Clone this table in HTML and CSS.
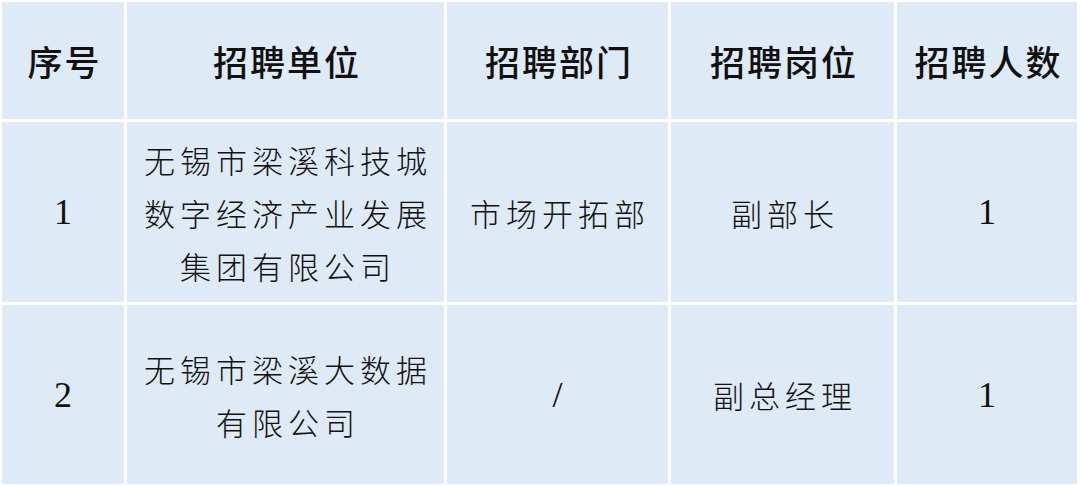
FILE: index.html
```html
<!DOCTYPE html>
<html lang="zh-CN">
<head>
<meta charset="utf-8">
<title>招聘岗位</title>
<link rel="stylesheet" href="styles.css">
</head>
<body>
<div class="table">
  <div class="cell head">序号</div>
  <div class="cell head">招聘单位</div>
  <div class="cell head">招聘部门</div>
  <div class="cell head">招聘岗位</div>
  <div class="cell head">招聘人数</div>

  <div class="cell num">1</div>
  <div class="cell body">无锡市梁溪科技城<br>数字经济产业发展<br>集团有限公司</div>
  <div class="cell body">市场开拓部</div>
  <div class="cell body">副部长</div>
  <div class="cell num">1</div>

  <div class="cell num">2</div>
  <div class="cell body">无锡市梁溪大数据<br>有限公司</div>
  <div class="cell num">/</div>
  <div class="cell body">副总经理</div>
  <div class="cell num">1</div>
</div>
</body>
</html>
```
FILE: styles.css
```css
html, body {
  margin: 0;
  padding: 0;
  background: #ffffff;
}
.table {
  width: 1080px;
  height: 486px;
  box-sizing: border-box;
  padding: 2px 3px 2px 2px;
  display: grid;
  grid-template-columns: 122px 317px 221px 223px 1fr;
  grid-template-rows: 117px 180px 179px;
  gap: 3px;
  background: #ffffff;
}
.cell {
  background: #deeaf6;
  display: flex;
  align-items: center;
  justify-content: center;
  text-align: center;
  color: #111111;
}
.head {
  font-family: "Noto Sans CJK SC", "Noto Sans", sans-serif;
  font-size: 35px;
  font-weight: 500;
  letter-spacing: 2px;
  padding-left: 3px;
}
.body {
  font-family: "Noto Sans CJK SC", "Noto Sans", sans-serif;
  font-size: 31px;
  font-weight: 300;
  letter-spacing: 5px;
  line-height: 53px;
  padding-left: 5px;
}
.num {
  font-family: "Liberation Serif", "Times New Roman", serif;
  font-size: 36px;
}
```
